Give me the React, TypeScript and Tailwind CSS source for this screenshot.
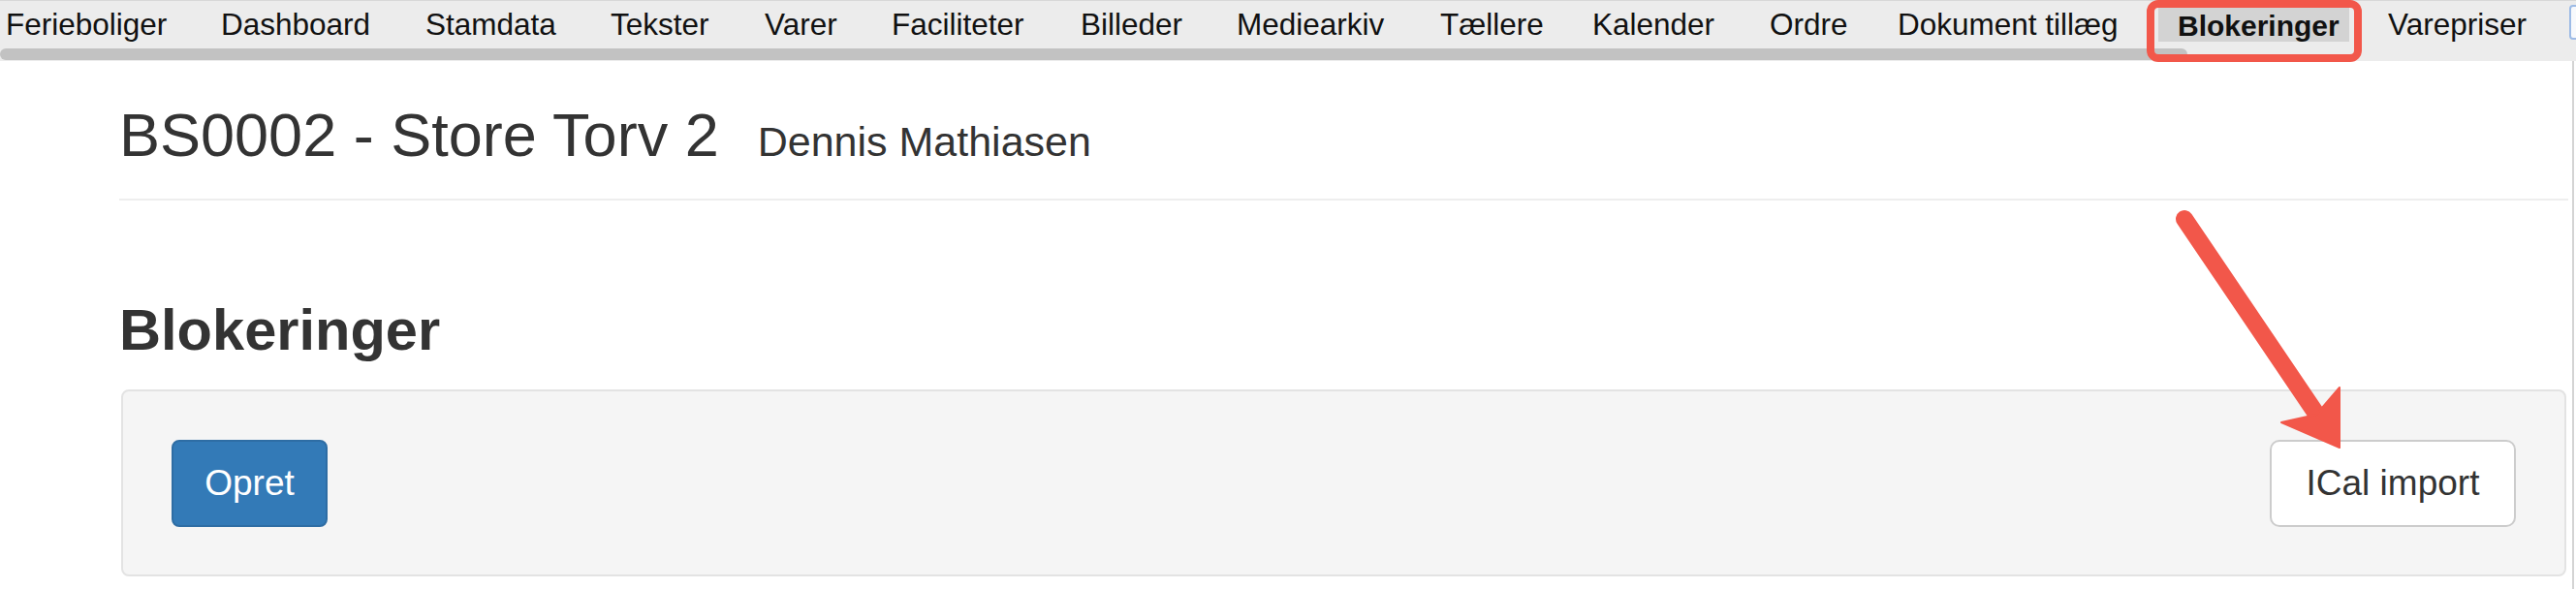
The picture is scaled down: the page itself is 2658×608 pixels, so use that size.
import React from "react";

const items: { label: string; w: number }[] = [
  { label: "Ferieboliger", w: 222 },
  { label: "Dashboard", w: 211 },
  { label: "Stamdata", w: 191 },
  { label: "Tekster", w: 159 },
  { label: "Varer", w: 131 },
  { label: "Faciliteter", w: 195 },
  { label: "Billeder", w: 161 },
  { label: "Mediearkiv", w: 210 },
  { label: "Tællere", w: 157 },
  { label: "Kalender", w: 183 },
  { label: "Ordre", w: 132 },
  { label: "Dokument tillæg", w: 269 },
];

export default function App() {
  return (
    <div
      className="relative w-[2658px] h-[608px] overflow-hidden bg-white text-[#333]"
      style={{ fontFamily: '"Liberation Sans", Arial, sans-serif' }}
    >
      {/* Top tab navigation */}
      <div className="relative h-[63px] bg-[#ececec] border-t border-[#d8d8d8]">
        <div className="flex items-start pl-[6px] text-[#111]">
          {items.map((it) => (
            <div
              key={it.label}
              className="mt-[9px] text-[31.5px] leading-none whitespace-nowrap shrink-0"
              style={{ width: it.w }}
            >
              {it.label}
            </div>
          ))}
          <div className="mt-[7px] h-[35px] w-[197px] shrink-0 bg-[#d3d3d3] pl-[20px] pt-[4px] text-[30px] font-bold leading-none whitespace-nowrap">
            Blokeringer
          </div>
          <div className="ml-[40px] mt-[9px] text-[31.5px] leading-none whitespace-nowrap shrink-0">
            Varepriser
          </div>
        </div>
        {/* scrollbar thumb */}
        <div className="absolute left-0 top-[49px] h-[12px] w-[2257px] rounded-full bg-[#c2c2c2]" />
        {/* partially visible focused element at the right edge */}
        <div className="absolute left-[2651px] top-[4px] h-[36px] w-[30px] rounded-[4px] border-2 border-[#9dbbe6] bg-[#f7f9fc]" />
        {/* red highlight box */}
        <div className="absolute left-[2215px] top-[-1px] h-[64px] w-[222px] rounded-[12px] border-[8px] border-[#f2574a]" />
      </div>

      {/* Content */}
      <div className="flex">
        <div className="flex-1 pl-[123px] pr-[4px]">
          <div className="h-[144px] border-b-2 border-[#eeeeee] pt-[45px]">
            <div className="flex items-baseline">
              <span className="text-[63px] leading-none">BS0002 - Store Torv 2</span>
              <span className="ml-[40px] text-[43px] leading-none">Dennis Mathiasen</span>
            </div>
          </div>

          <h2 className="mt-[104px] h-[59px] text-[59.6px] font-bold leading-none">Blokeringer</h2>

          <div className="mt-[32px] ml-[2px] mr-[2px] flex h-[193px] items-center justify-between rounded-[8px] border-2 border-[#e3e3e3] bg-[#f5f5f5] px-[50px]">
            <button className="flex h-[90px] w-[161px] items-center justify-center rounded-[8px] border-2 border-[#2e6da4] bg-[#337ab7] text-[37px] text-white">
              Opret
            </button>
            <button className="flex h-[90px] w-[254px] items-center justify-center rounded-[10px] border-2 border-[#cccccc] bg-white text-[37px] text-[#333]">
              ICal import
            </button>
          </div>
        </div>
        <div className="w-[2px] h-[545px] bg-[#d4d4d4]" />
        <div className="w-[2px]" />
      </div>

      {/* Annotation arrow */}
      <svg
        className="pointer-events-none absolute left-0 top-0"
        width={2658}
        height={608}
        viewBox="0 0 2658 608"
      >
        <line
          x1={2254}
          y1={226}
          x2={2392}
          y2={430}
          stroke="#f2574a"
          strokeWidth={18}
          strokeLinecap="round"
        />
        <polygon
          points="2414,462 2414,400 2390,428 2354,436"
          fill="#f2574a"
          stroke="#f2574a"
          strokeWidth={2}
          strokeLinejoin="round"
        />
      </svg>
    </div>
  );
}
